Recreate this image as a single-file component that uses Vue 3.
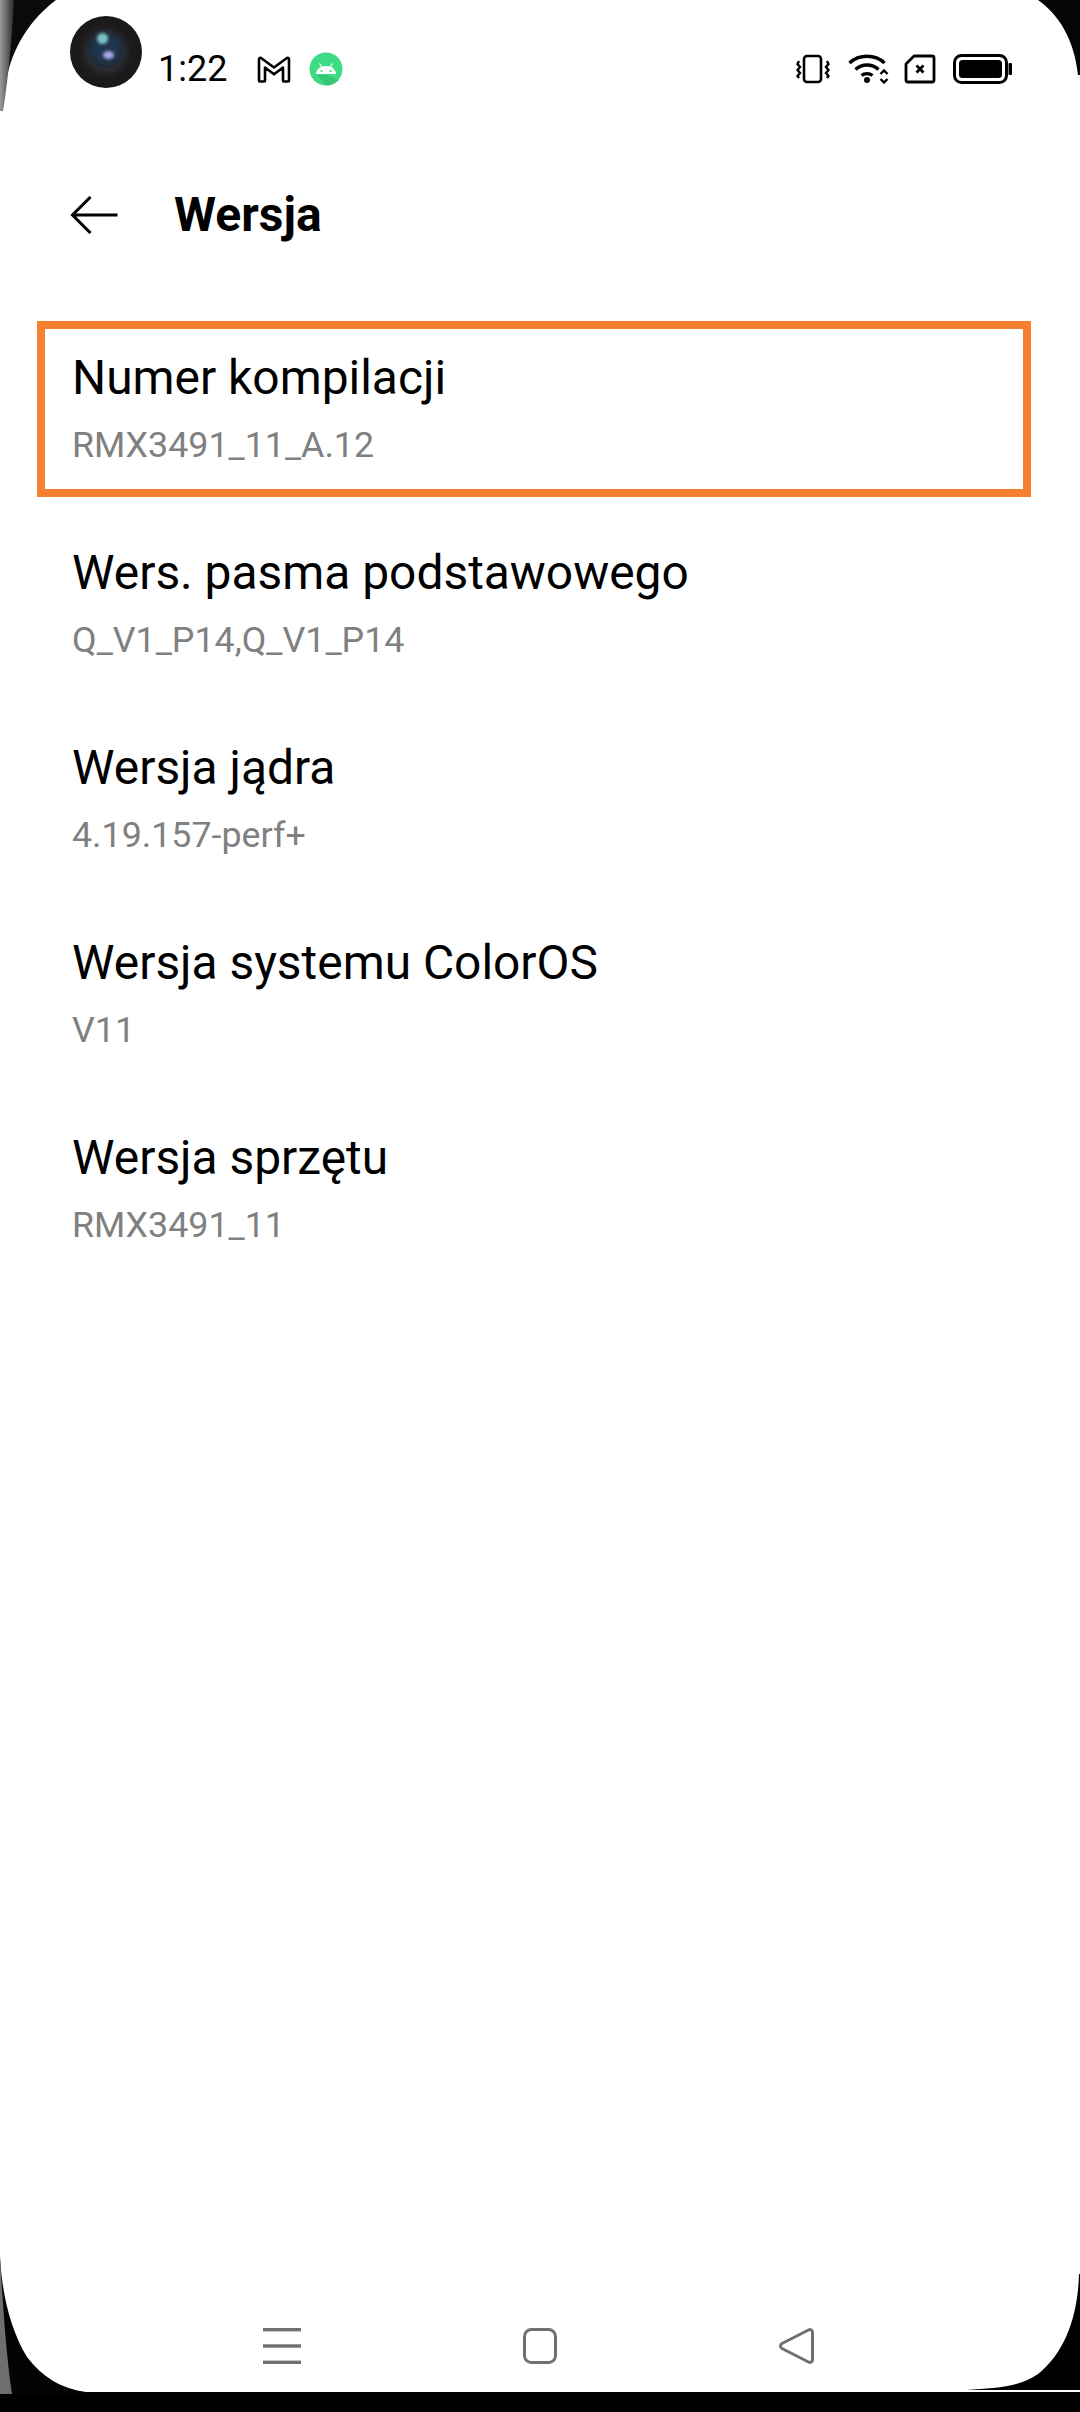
<script setup>
const rows = [
  { title: 'Numer kompilacji', value: 'RMX3491_11_A.12', marked: true },
  { title: 'Wers. pasma podstawowego', value: 'Q_V1_P14,Q_V1_P14' },
  { title: 'Wersja jądra', value: '4.19.157-perf+' },
  { title: 'Wersja systemu ColorOS', value: 'V11' },
  { title: 'Wersja sprzętu', value: 'RMX3491_11' },
]
</script>

<template>
  <div class="screen">
    <header class="status">
      <span class="time">1:22</span>
      <svg class="gmail" width="34" height="27" viewBox="0 0 34 27" fill="none">
        <path d="M2 24.5V3.5C2 2 3.4 1.5 4.4 2.2L17 11.5L29.6 2.2C30.6 1.5 32 2 32 3.5V24.5C32 25 31.6 25.5 31 25.5H27C26.4 25.5 26 25 26 24.5V11.5L17 18.3L8 11.5V24.5C8 25 7.6 25.5 7 25.5H3C2.4 25.5 2 25 2 24.5Z" stroke="#000" stroke-width="2.6" stroke-linejoin="round"/>
      </svg>
      <svg class="android" width="34" height="34" viewBox="0 0 34 34">
        <circle cx="17" cy="17" r="16.5" fill="#3ddc84"/>
        <path d="M8 23L17 23L30 28A16.5 16.5 0 0 1 17 33.5Z" fill="#32b56f" opacity=".55"/>
        <path d="M7 22C7.4 17.5 11 14 17 14C23 14 26.6 17.5 27 22Z" fill="#fff"/>
        <path d="M10.5 11.5L13 15M23.5 11.5L21 15" stroke="#fff" stroke-width="1.2"/>
        <circle cx="12.5" cy="19" r="1.1" fill="#3ddc84"/>
        <circle cx="21.5" cy="19" r="1.1" fill="#3ddc84"/>
      </svg>
      <span class="status-fill"></span>
      <svg class="vibrate" width="34" height="30" viewBox="0 0 34 30" fill="none" stroke="#000">
        <rect x="8" y="2" width="17" height="26" rx="3" stroke-width="2.6"/>
        <path d="M3 7L1.5 10L4 13L1.5 16L4 19L1.5 22L3 24M31 7L32.5 10L30 13L32.5 16L30 19L32.5 22L31 24" stroke-width="2.4"/>
      </svg>
      <svg class="wifi" width="42" height="30" viewBox="0 0 42 30" fill="none" stroke="#000">
        <path d="M1.5 9C11 0 27 0 36.5 9" stroke-width="3.4"/>
        <path d="M7.5 15.5C14 9.5 24 9.5 30.5 15.5" stroke-width="3.4"/>
        <path d="M13.5 21.5C16.5 19 21.5 19 24.5 21.5" stroke-width="3.2"/>
        <circle cx="19" cy="26" r="3" fill="#000" stroke="none"/>
        <path d="M32.5 20L36 16.5L39.5 20M32.5 25L36 28.5L39.5 25" stroke-width="2.4"/>
      </svg>
      <svg class="sim" width="32" height="30" viewBox="0 0 32 30" fill="none" stroke="#000">
        <path d="M10 2H28C29.2 2 30 2.8 30 4V26C30 27.2 29.2 28 28 28H4C2.8 28 2 27.2 2 26V10Z" stroke-width="2.8" stroke-linejoin="round"/>
        <path d="M12.5 11.5L19.5 18.5M19.5 11.5L12.5 18.5" stroke-width="2.8"/>
      </svg>
      <svg class="battery" width="59" height="30" viewBox="0 0 59 30" fill="none">
        <rect x="1.5" y="1.5" width="52" height="27" rx="7" stroke="#000" stroke-width="3"/>
        <rect x="6" y="6" width="43" height="18" rx="3.5" fill="#000"/>
        <rect x="55.5" y="9" width="3.5" height="12" rx="1" fill="#000"/>
      </svg>
    </header>

    <div class="appbar">
      <svg class="back" width="48" height="38" viewBox="0 0 48 38" fill="none" stroke="#000" stroke-width="3">
        <path d="M47.5 19H2.5M20.5 1L2.5 19L20.5 37"/>
      </svg>
      <h1 class="heading">Wersja</h1>
    </div>

    <ul class="list">
      <li v-for="row in rows" :key="row.title" class="row" :class="{ marked: row.marked }">
        <span class="row-title">{{ row.title }}</span>
        <span class="row-value">{{ row.value }}</span>
      </li>
    </ul>

    <nav class="nav">
      <svg width="38" height="36" viewBox="0 0 38 36" fill="#707070">
        <rect x="0" y="0" width="38" height="3.4"/>
        <rect x="0" y="16.3" width="38" height="3.4"/>
        <rect x="0" y="32.6" width="38" height="3.4"/>
      </svg>
      <svg width="34" height="36" viewBox="0 0 34 36" fill="none" stroke="#707070" stroke-width="3">
        <rect x="1.5" y="1.5" width="31" height="33" rx="7"/>
      </svg>
      <svg width="35" height="36" viewBox="0 0 35 36" fill="none" stroke="#707070" stroke-width="3" stroke-linejoin="round">
        <path d="M29.5 2C31.5 1 33.5 2 33.5 4.5V31.5C33.5 34 31.5 35 29.5 34L3 20.5C1 19.3 1 16.7 3 15.5Z"/>
      </svg>
    </nav>
    <div class="chin"></div>

    <!-- Punch-hole camera and the rounded display corners lie over the page -->
    <div class="camera">
      <span class="lens"></span>
      <span class="glint glint-a"></span>
      <span class="glint glint-b"></span>
    </div>
    <svg class="corner corner-tl" width="60" height="112" viewBox="0 0 60 112">
      <defs>
        <linearGradient id="edge" x1="0" x2="1" y1="0" y2="0">
          <stop offset="0" stop-color="#9a9a98"/>
          <stop offset="1" stop-color="#2a2a2a"/>
        </linearGradient>
      </defs>
      <path d="M0 0H56C32 18 12 46 6 82L2 111H0Z" fill="#0a0a0a"/>
      <path d="M0 0H14C12 40 8 80 3 111H0Z" fill="url(#edge)"/>
    </svg>
    <svg class="corner corner-tr" width="42" height="75" viewBox="0 0 42 75">
      <path d="M0 0C20 14 36 38 40 75H42V0Z" fill="#050505"/>
    </svg>
    <svg class="corner corner-bl" width="90" height="137" viewBox="0 0 90 137">
      <path d="M0 0C2 36 10 72 27 100C42 120 62 132 86 135H90V137H0Z" fill="#050303"/>
      <path d="M0 0C2 30 5 90 12 137H0Z" fill="#6e6e6e"/>
    </svg>
    <svg class="corner corner-br" width="114" height="118" viewBox="0 0 114 118">
      <path d="M113 0C112 40 100 78 72 100C52 114 28 114 0 116H114V0Z" fill="#000"/>
    </svg>
  </div>
</template>

<style scoped>
.screen {
  position: relative;
  display: flex;
  flex-direction: column;
  width: 1080px;
  height: 2412px;
  overflow: hidden;
  background: #fff;
  color: #000;
  font-family: Roboto, "Noto Sans", sans-serif;
}
.status {
  display: flex;
  align-items: center;
  height: 138px;
  padding: 0 68px 0 158px;
  box-sizing: border-box;
  flex: none;
}
.time {
  font-size: 36px;
  font-weight: 400;
  line-height: 1;
}
.gmail { margin-left: 30px; }
.android { margin-left: 18px; }
.status-fill { flex: 1; }
.vibrate { margin-right: 1px; }
.wifi { margin-left: 17px; }
.sim { margin-left: 14px; }
.battery { margin-left: 17px; }

.appbar {
  display: flex;
  align-items: center;
  height: 154px;
  padding-left: 70px;
  box-sizing: border-box;
  flex: none;
}
.heading {
  margin: 0 0 0 56px;
  font-size: 48px;
  font-weight: 700;
  line-height: 1;
}

.list {
  display: flex;
  flex-direction: column;
  gap: 19px;
  margin: 29px 49px 0 37px;
  padding: 0;
  list-style: none;
}
.row {
  display: flex;
  flex-direction: column;
  justify-content: center;
  gap: 18px;
  height: 176px;
  padding: 0 27px 3px;
  box-sizing: border-box;
  border: 8px solid transparent;
}
.row.marked { border-color: #f58130; }
.row-title {
  font-size: 47.9px;
  line-height: 56px;
}
.row-value {
  font-size: 35.8px;
  line-height: 42px;
  color: #808080;
}

.nav {
  display: flex;
  align-items: center;
  gap: 222px;
  height: 92px;
  margin-top: auto;
  padding-left: 263px;
  flex: none;
}
.chin {
  height: 20px;
  background: #000;
  flex: none;
}

.camera {
  position: absolute;
  left: 70px;
  top: 16px;
  width: 72px;
  height: 72px;
  border-radius: 50%;
  background: radial-gradient(circle at 50% 50%, #1c1c28 0 22%, #2a2d33 34%, #1c1a1b 52%, #171516 100%);
  overflow: hidden;
}
.lens {
  position: absolute;
  left: 18px;
  top: 14px;
  width: 36px;
  height: 38px;
  border-radius: 50%;
  background: radial-gradient(circle, #1f3550 0 40%, #1f2a33 70%, transparent 100%);
}
.glint {
  position: absolute;
  border-radius: 50%;
  filter: blur(1.5px);
}
.glint-a {
  left: 27px;
  top: 17px;
  width: 11px;
  height: 11px;
  background: #7fc2c4;
}
.glint-b {
  left: 33px;
  top: 35px;
  width: 11px;
  height: 8px;
  background: #a9a9e6;
}
.corner {
  position: absolute;
  display: block;
}
.corner-tl { left: 0; top: 0; }
.corner-tr { right: 0; top: 0; }
.corner-bl { left: 0; bottom: 18px; }
.corner-br { right: 0; bottom: 20px; }
</style>
